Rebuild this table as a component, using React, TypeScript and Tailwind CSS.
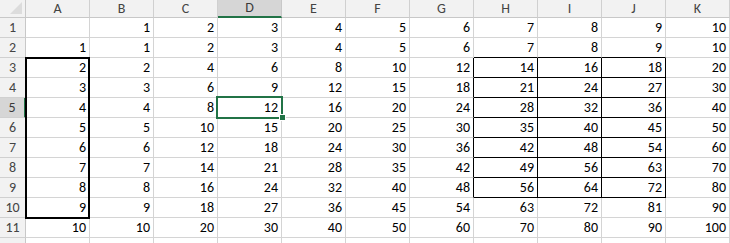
import React from "react";

const COLS = ["A", "B", "C", "D", "E", "F", "G", "H", "I", "J", "K"];
const ROWS = [1, 2, 3, 4, 5, 6, 7, 8, 9, 10, 11, 12];

// value shown in a cell (col index 0 = A)
function valueOf(row: number, col: number): string {
  if (row === 12) return "";
  if (row === 1) return col === 0 ? "" : String(col);
  if (row === 2) return col === 0 ? "1" : String(col);
  const a = row - 1;
  return col === 0 ? String(a) : String(col * a);
}

function cellClass(row: number, col: number) {
  // H3:J9 get thin black borders all round
  const inBox = row >= 3 && row <= 9 && col >= 7 && col <= 9;
  const leftOfBox = row >= 3 && row <= 9 && col === 6;
  const aboveBox = row === 2 && col >= 7 && col <= 9;
  if (inBox) return "border-r border-b border-r-black border-b-black";
  if (leftOfBox) return "border-r border-b border-r-black border-b-[#d4d4d4]";
  if (aboveBox) return "border-r border-b border-r-[#d4d4d4] border-b-black";
  return "border-r border-b border-[#d4d4d4]";
}

const App = () => {
  return (
    <div
      className="relative w-[730px] h-[243px] overflow-hidden bg-white text-[14px] text-black"
      style={{ fontFamily: 'Carlito, "Liberation Sans", Arial, sans-serif' }}
    >
      <div className="grid grid-cols-[26px_repeat(11,64px)] grid-rows-[18px_repeat(12,20px)]">
        {/* corner */}
        <div className="relative bg-[#f2f2f2] border-r border-b border-[#c8c8c8]">
          <svg className="absolute right-[3px] bottom-[3px]" width="12" height="12" viewBox="0 0 12 12">
            <polygon points="12,0 12,12 0,12" fill="#dcdcdc" />
          </svg>
        </div>
        {COLS.map((c) =>
          c === "D" ? (
            <div
              key={c}
              className="bg-[#d6d6d6] border-r border-[#c8c8c8] border-b-2 border-b-[#217346] text-center leading-[16px] text-[#3a3a3a]"
            >
              {c}
            </div>
          ) : (
            <div
              key={c}
              className="bg-[#f2f2f2] border-r border-b border-[#d0d0d0] border-b-[#c8c8c8] text-center leading-[17px] text-[#444]"
            >
              {c}
            </div>
          )
        )}

        {ROWS.map((r) => (
          <React.Fragment key={r}>
            {r === 5 ? (
              <div className="bg-[#d6d6d6] border-b border-[#d0d0d0] border-r-2 border-r-[#217346] text-center leading-[19px] text-[#3a3a3a]">
                {r}
              </div>
            ) : (
              <div className="bg-[#f2f2f2] border-r border-b border-[#d0d0d0] border-r-[#c8c8c8] text-center leading-[19px] text-[#444]">
                {r < 12 ? r : ""}
              </div>
            )}
            {COLS.map((c, ci) => (
              <div key={c} className={`${cellClass(r, ci)} text-right pr-[3px] leading-[19px]`}>
                {valueOf(r, ci)}
              </div>
            ))}
          </React.Fragment>
        ))}
      </div>

      {/* thick box border round A3:A10 */}
      <div className="absolute left-[25px] top-[57px] w-[65px] h-[162px] border-2 border-black pointer-events-none" />

      {/* active cell D5 */}
      <div className="absolute left-[216px] top-[96px] w-[67px] h-[23px] border-2 border-[#217346] pointer-events-none" />
      <div className="absolute left-[279px] top-[114px] w-[7px] h-[7px] bg-[#217346] border border-white" />
    </div>
  );
};

export default App;
